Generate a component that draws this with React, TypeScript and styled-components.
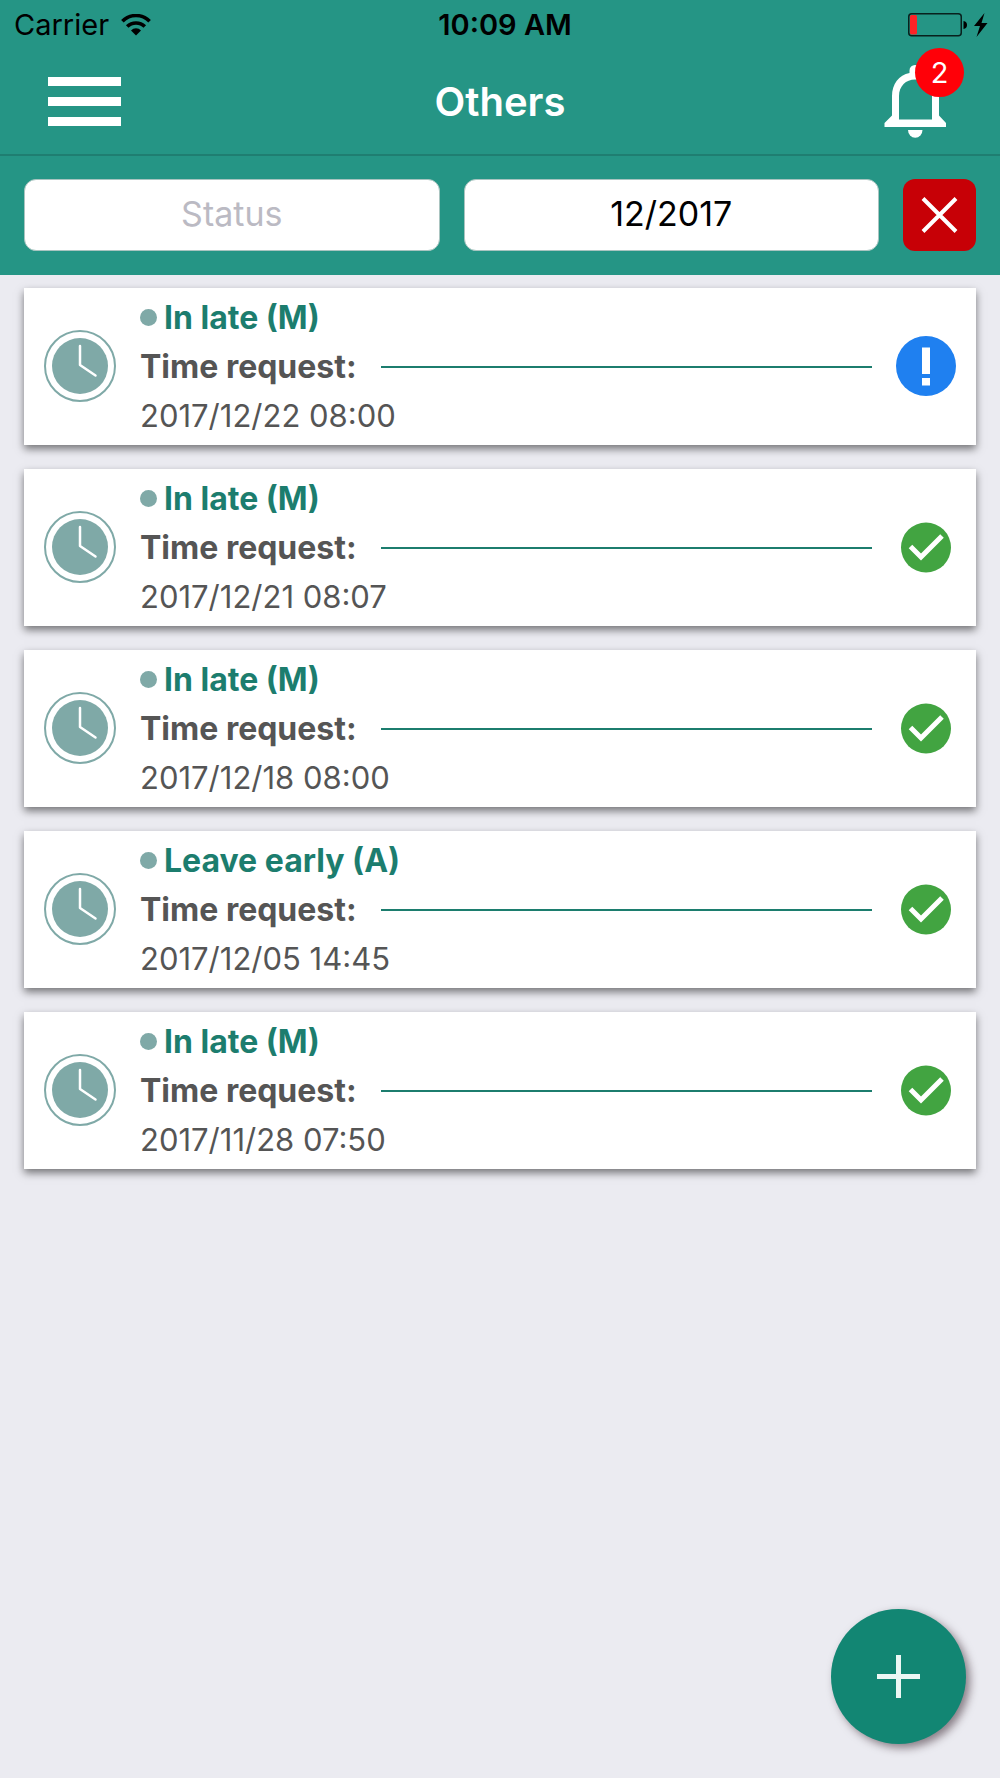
import React, { useState } from "react";
import styled, { createGlobalStyle } from "styled-components";

const color = {
  bar: "#259585",
  barEdge: "#1f7e71",
  page: "#ebebf1",
  accent: "#1c7d6e",
  muted: "#7fa9a7",
  text: "#555555",
  fab: "#128673",
  danger: "#c70006",
  badge: "#ff0008",
  pending: "#1f80f0",
  approved: "#42a441",
};

const GlobalStyle = createGlobalStyle`
  * { box-sizing: border-box; }
  body {
    margin: 0;
    background: ${color.page};
    font-family: Inter, "Liberation Sans", sans-serif;
  }
  button, input { font: inherit; }
`;

const Screen = styled.div`
  min-height: 100vh;
  background: ${color.page};
`;

const Header = styled.header`
  background: ${color.bar};
`;

const StatusBar = styled.div`
  display: grid;
  grid-template-columns: 1fr auto 1fr;
  align-items: center;
  height: 50px;
  padding: 0 12px 0 14px;
  font-size: 29px;
  line-height: 32px;
  color: #000;
`;

const Carrier = styled.div`
  display: flex;
  align-items: center;
  gap: 12px;
`;

const Clock = styled.time`
  font-weight: 600;
  padding-left: 8px;
`;

const Power = styled.div`
  display: flex;
  align-items: center;
  justify-content: flex-end;
  gap: 7px;
`;

const NavBar = styled.nav`
  display: grid;
  grid-template-columns: 1fr auto 1fr;
  align-items: center;
  height: 106px;
  padding: 0 48px;
  border-bottom: 2px solid ${color.barEdge};
`;

const Title = styled.h1`
  margin: 0;
  font-size: 40px;
  line-height: 48px;
  font-weight: 600;
  color: #fff;
`;

const IconButton = styled.button`
  position: relative;
  display: flex;
  padding: 0;
  border: 0;
  background: none;
  cursor: pointer;
`;

const MenuButton = styled(IconButton)`
  justify-self: start;
`;

const BellButton = styled(IconButton)`
  justify-self: end;
  margin-right: 6px;
`;

const Badge = styled.span`
  position: absolute;
  top: -17px;
  right: -18px;
  width: 49px;
  height: 49px;
  border-radius: 50%;
  background: ${color.badge};
  color: #fff;
  font-size: 29px;
  line-height: 49px;
  text-align: center;
`;

const Filters = styled.form`
  display: grid;
  grid-template-columns: 1fr 1fr 73px;
  gap: 24px;
  padding: 23px 24px 24px;
`;

const FilterInput = styled.input`
  width: 100%;
  height: 72px;
  min-width: 0;
  padding: 0 16px 4px;
  border: 1px solid #a9c4c0;
  border-radius: 12px;
  background: #fff;
  color: #000;
  font-size: 34px;
  text-align: center;
  &::placeholder {
    color: #bbbac3;
    opacity: 1;
  }
`;

const ClearButton = styled.button`
  display: flex;
  align-items: center;
  justify-content: center;
  height: 72px;
  padding: 0;
  border: 0;
  border-radius: 12px;
  background: ${color.danger};
  cursor: pointer;
`;

const RequestList = styled.ul`
  display: flex;
  flex-direction: column;
  gap: 24px;
  margin: 0;
  padding: 13px 24px 24px;
  list-style: none;
`;

const Card = styled.li`
  display: grid;
  grid-template-columns: 72px 1fr 60px;
  align-items: center;
  column-gap: 24px;
  height: 157px;
  padding: 0 20px;
  background: #fff;
  box-shadow: 0 4px 8px rgba(0, 0, 0, 0.5);
`;

const Details = styled.div`
  color: ${color.text};
  font-size: 31px;
  line-height: 49px;
`;

const Kind = styled.h2`
  display: flex;
  align-items: center;
  gap: 7px;
  margin: 0;
  color: ${color.accent};
  font-size: 32px;
  font-weight: 700;
  &::before {
    content: "";
    width: 17px;
    height: 17px;
    border-radius: 50%;
    background: ${color.muted};
  }
`;

const LabelRow = styled.div`
  display: flex;
  align-items: center;
  gap: 24px;
  font-size: 32px;
  font-weight: 700;
  &::after {
    content: "";
    flex: 1;
    height: 2px;
    background: ${color.accent};
  }
`;

const Stamp = styled.time`
  display: block;
`;

const StatusIcon = styled.svg`
  display: block;
  justify-self: center;
`;

const AddButton = styled.button`
  position: fixed;
  right: 34px;
  bottom: 34px;
  display: flex;
  align-items: center;
  justify-content: center;
  width: 135px;
  height: 135px;
  padding: 0;
  border: 0;
  border-radius: 50%;
  background: ${color.fab};
  box-shadow: 4px 4px 9px rgba(40, 20, 30, 0.5);
  cursor: pointer;
`;

function WifiIcon() {
  return (
    <svg width="30" height="22" viewBox="0 0 30 22" fill="none" stroke="#000" strokeWidth="3.6" aria-hidden="true">
      <path d="M1.4 7.2A19.2 19.2 0 0 1 28.6 7.2" />
      <path d="M6.2 12.6A12.4 12.4 0 0 1 23.8 12.6" />
      <path d="M10 16.4A7 7 0 0 1 20 16.4L15 21.6Z" fill="#000" stroke="none" />
    </svg>
  );
}

function BatteryIcon() {
  return (
    <svg width="59" height="24" viewBox="0 0 59 24" aria-hidden="true">
      <rect x="0.75" y="0.75" width="52.5" height="22" rx="3" fill="none" stroke="#08211d" strokeWidth="1.5" />
      <rect x="2" y="2" width="7" height="19.5" rx="1.5" fill="#ff2226" />
      <path d="M55.5 8Q59 8.5 59 12T55.5 16Z" fill="#000" />
    </svg>
  );
}

function BoltIcon() {
  return (
    <svg width="14" height="24" viewBox="0 0 14 24" fill="#000" aria-hidden="true">
      <path d="M10.5 0L0 13H6L2.500 24L13.500 10H7.500Z" />
    </svg>
  );
}

function MenuIcon() {
  return (
    <svg width="73" height="50" viewBox="0 0 73 50" fill="#fff" aria-hidden="true">
      <rect width="73" height="9" />
      <rect y="20" width="73" height="9" />
      <rect y="40" width="73" height="9" />
    </svg>
  );
}

function BellIcon() {
  return (
    <svg width="62" height="74" viewBox="0 0 62 74" fill="#fff" aria-hidden="true">
      <path
        fillRule="evenodd"
        d="M0.5 62V58L8 50.5V31C8 19 15 10 25.5 8V5.5A5.5 5.5 0 0 1 36.5 5.5V8C47 10 55 19 55 31V50.5L62 58V62ZM15 54.5V31C15 21 22 14.5 31 14.5S48 21 48 31V54.5Z"
      />
      <path d="M24 65H38.5A7.25 7.75 0 0 1 24 65Z" />
    </svg>
  );
}

function CrossIcon() {
  return (
    <svg width="37" height="36" viewBox="0 0 37 36" stroke="#fff" strokeWidth="4" aria-hidden="true">
      <path d="M2 1.5L35 34.5M35 1.5L2 34.5" />
    </svg>
  );
}

function PlusIcon() {
  return (
    <svg width="43" height="43" viewBox="0 0 43 43" stroke="#ecf7f4" strokeWidth="5" aria-hidden="true">
      <path d="M21.5 0V43M0 21.5H43" />
    </svg>
  );
}

function TimeIcon() {
  return (
    <svg width="72" height="73" viewBox="0 0 72 73" aria-hidden="true">
      <circle cx="36" cy="36" r="35" fill="none" stroke={color.muted} strokeWidth="2" />
      <circle cx="36" cy="36" r="28" fill={color.muted} />
      <path
        d="M36 16V35L51.5 45.5"
        fill="none"
        stroke="#fff"
        strokeWidth="2.5"
        strokeLinecap="round"
        strokeLinejoin="round"
      />
    </svg>
  );
}

type Status = "pending" | "approved";

function StatusMark({ status }: { status: Status }) {
  if (status === "pending") {
    return (
      <StatusIcon width="60" height="61" viewBox="0 0 60 61" role="img" aria-label="Pending">
        <circle cx="30" cy="30" r="30" fill={color.pending} />
        <path d="M26 11.5H34V38H26ZM26 42H34V49.5H26Z" fill="#fff" />
      </StatusIcon>
    );
  }
  return (
    <StatusIcon width="50" height="51" viewBox="0 0 50 51" role="img" aria-label="Approved">
      <circle cx="25" cy="25.5" r="25" fill={color.approved} />
      <path d="M9.5 24.5L20 35L41 14" fill="none" stroke="#fff" strokeWidth="5" />
    </StatusIcon>
  );
}

interface Request {
  kind: string;
  at: string;
  status: Status;
}

const requests: Request[] = [
  { kind: "In late (M)", at: "2017/12/22 08:00", status: "pending" },
  { kind: "In late (M)", at: "2017/12/21 08:07", status: "approved" },
  { kind: "In late (M)", at: "2017/12/18 08:00", status: "approved" },
  { kind: "Leave early (A)", at: "2017/12/05 14:45", status: "approved" },
  { kind: "In late (M)", at: "2017/11/28 07:50", status: "approved" },
];

export default function App() {
  const [status, setStatus] = useState("");
  const [month, setMonth] = useState("12/2017");

  const clear = () => {
    setStatus("");
    setMonth("");
  };

  return (
    <Screen>
      <GlobalStyle />
      <Header>
        <StatusBar>
          <Carrier>
            Carrier
            <WifiIcon />
          </Carrier>
          <Clock>10:09 AM</Clock>
          <Power>
            <BatteryIcon />
            <BoltIcon />
          </Power>
        </StatusBar>
        <NavBar>
          <MenuButton type="button" aria-label="Menu">
            <MenuIcon />
          </MenuButton>
          <Title>Others</Title>
          <BellButton type="button" aria-label="Notifications">
            <BellIcon />
            <Badge>2</Badge>
          </BellButton>
        </NavBar>
        <Filters onSubmit={(e) => e.preventDefault()}>
          <FilterInput
            aria-label="Status"
            placeholder="Status"
            value={status}
            onChange={(e) => setStatus(e.target.value)}
          />
          <FilterInput aria-label="Month" value={month} onChange={(e) => setMonth(e.target.value)} />
          <ClearButton type="button" aria-label="Clear filters" onClick={clear}>
            <CrossIcon />
          </ClearButton>
        </Filters>
      </Header>
      <main>
        <RequestList>
          {requests.map((r) => (
            <Card key={r.at}>
              <TimeIcon />
              <Details>
                <Kind>{r.kind}</Kind>
                <LabelRow>Time request:</LabelRow>
                <Stamp>{r.at}</Stamp>
              </Details>
              <StatusMark status={r.status} />
            </Card>
          ))}
        </RequestList>
      </main>
      <AddButton type="button" aria-label="Add request">
        <PlusIcon />
      </AddButton>
    </Screen>
  );
}
